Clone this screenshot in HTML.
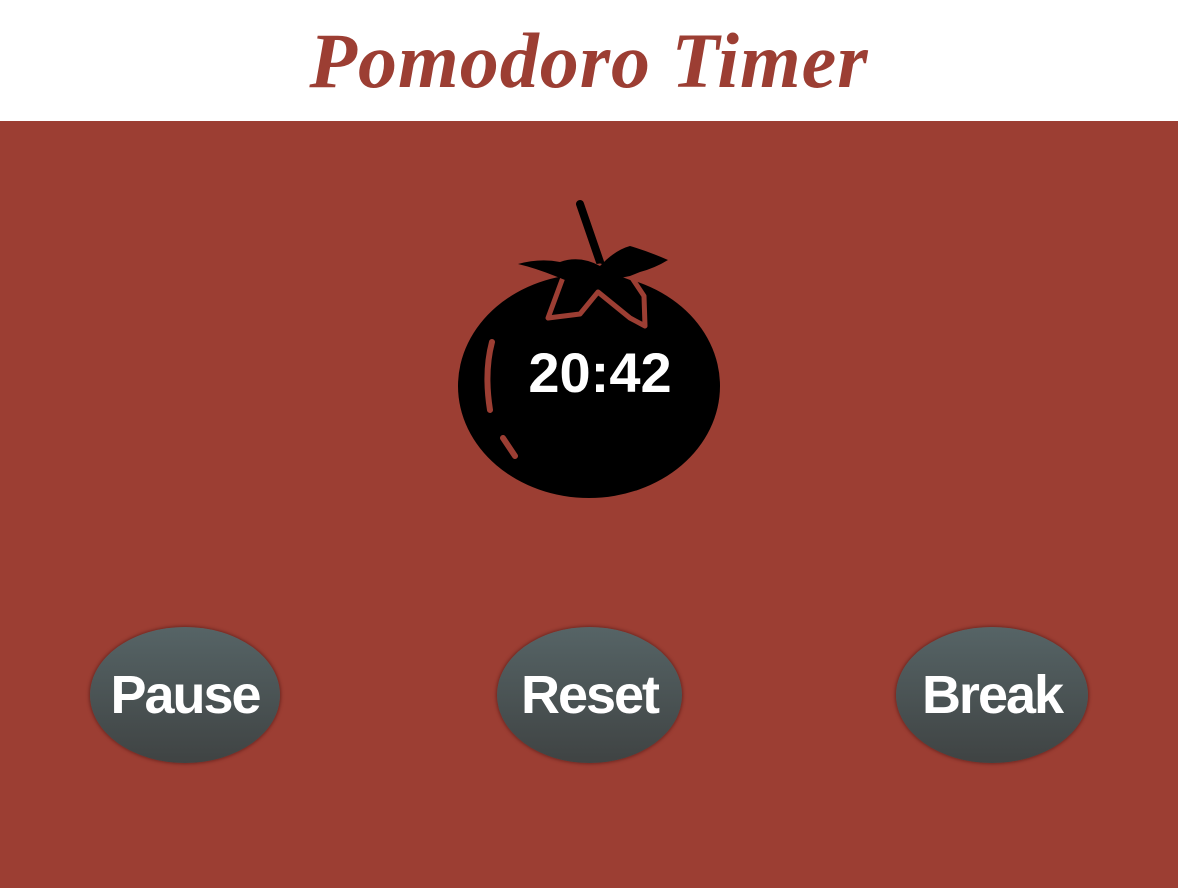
<!DOCTYPE html>
<html><head><meta charset="utf-8"><style>
html,body{margin:0;padding:0;width:1178px;height:888px;overflow:hidden;background:#9c3e33;font-family:"Liberation Sans",sans-serif}
.hdr{position:absolute;left:0;top:0;width:1178px;height:121px;background:#fff;text-align:center}
.hdr h1{margin:0;font-family:"Liberation Serif",serif;font-style:italic;font-weight:bold;font-size:78px;color:#9c3e33;line-height:121px;letter-spacing:1px}
.btn{position:absolute;top:627px;height:136px;border-radius:50%;background:linear-gradient(#566466,#3f4343);box-shadow:0 0 3px 1px #6b2620;color:#fff;font-weight:bold;font-size:54px;text-align:center;line-height:136px;letter-spacing:-2px}
.time{position:absolute;left:458px;top:338px;width:262px;text-align:center;color:#fff;font-weight:bold;font-size:56px;line-height:70px;padding-left:22px;box-sizing:border-box}
</style></head><body>
<div class="hdr"><h1>Pomodoro Timer</h1></div>
<svg style="position:absolute;left:0;top:0" width="1178" height="888">
<ellipse cx="589" cy="386" rx="131" ry="112" fill="#000"/>
<line x1="580" y1="204" x2="600" y2="262" stroke="#000" stroke-width="8" stroke-linecap="round"/>
<path d="M565 272 L548 318 L580 314 L598 292 L630 318 L645 326 L644 296 L632 278 L600 266 Z" fill="#000" stroke="#9c3e33" stroke-width="5" stroke-linejoin="round"/>
<path d="M518 264 Q540 258 560 262 Q580 255 600 266 Q615 250 630 246 Q650 252 668 260 Q655 268 640 272 L630 276 L600 282 L570 282 L555 276 Q535 268 518 264 Z" fill="#000"/>
<path d="M492 342 Q484 372 490 410" stroke="#9c3e33" stroke-width="6" fill="none" stroke-linecap="round"/>
<path d="M503 438 L515 456" stroke="#9c3e33" stroke-width="6" fill="none" stroke-linecap="round"/>
</svg>
<div class="time">20:42</div>
<div class="btn" style="left:90px;width:190px">Pause</div>
<div class="btn" style="left:497px;width:185px">Reset</div>
<div class="btn" style="left:896px;width:192px">Break</div>
</body></html>
